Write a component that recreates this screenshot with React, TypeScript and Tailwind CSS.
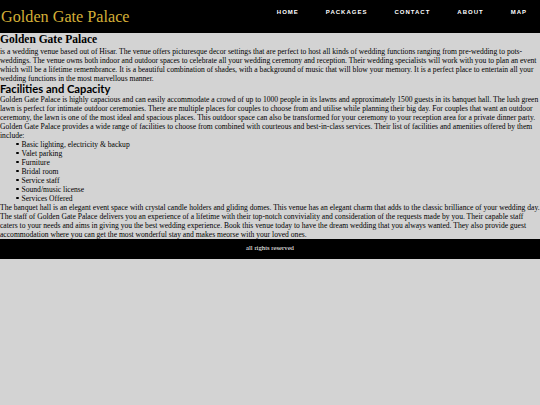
export default function App() {
  const navs = ["HOME", "PACKAGES", "CONTACT", "ABOUT", "MAP"];
  const items = [
    "Basic lighting, electricity & backup",
    "Valet parking",
    "Furniture",
    "Bridal room",
    "Service staff",
    "Sound/music license",
    "Services Offered",
  ];
  return (
    <div className="min-h-[405px] bg-[#d3d3d3] text-black font-['Liberation_Serif',serif]">
      <header className="flex h-[33px] items-start justify-between bg-black">
        <div className="pl-px pt-[8px] text-[16.2px] leading-[18px] text-[#d4af37]">Golden Gate Palace</div>
        <nav className="flex gap-[27px] pr-[13px] pt-[9px] font-['Liberation_Sans',sans-serif] text-[6px] font-bold leading-[7px] tracking-[1px] text-white">
          {navs.map((n) => (
            <span key={n}>{n}</span>
          ))}
        </nav>
      </header>
      <main className="text-[7.6px] leading-[9px]">
        <h2 className="text-[11.5px] font-bold leading-[13.5px]">Golden Gate Palace</h2>
        <p>
          is a wedding venue based out of Hisar. The venue offers picturesque decor settings that are perfect to host all kinds of wedding functions ranging from pre-wedding to pots-weddings. The venue owns both indoor and outdoor spaces to celebrate all your wedding ceremony and reception. Their wedding specialists will work with you to plan an event which will be a lifetime remembrance. It is a beautiful combination of shades, with a background of music that will blow your memory. It is a perfect place to entertain all your wedding functions in the most marvellous manner.
        </p>
        <h2 className="font-['Lato',sans-serif] text-[11.2px] font-bold leading-[12px]">Facilities and Capacity</h2>
        <p>
          Golden Gate Palace is highly capacious and can easily accommodate a crowd of up to 1000 people in its lawns and approximately 1500 guests in its banquet hall. The lush green lawn is perfect for intimate outdoor ceremonies. There are multiple places for couples to choose from and utilise while planning their big day. For couples that want an outdoor ceremony, the lawn is one of the most ideal and spacious places. This outdoor space can also be transformed for your ceremony to your reception area for a private dinner party. Golden Gate Palace provides a wide range of facilities to choose from combined with courteous and best-in-class services. Their list of facilities and amenities offered by them include:
        </p>
        <ul className="pl-[16px]">
          {items.map((i) => (
            <li key={i} className="flex items-center">
              <span className="mr-[3px] inline-block h-[2.5px] w-[2.5px] rounded-full bg-black"></span>
              <span>{i}</span>
            </li>
          ))}
        </ul>
        <p>
          The banquet hall is an elegant event space with crystal candle holders and gliding domes. This venue has an elegant charm that adds to the classic brilliance of your wedding day. The staff of Golden Gate Palace delivers you an experience of a lifetime with their top-notch conviviality and consideration of the requests made by you. Their capable staff caters to your needs and aims in giving you the best wedding experience. Book this venue today to have the dream wedding that you always wanted. They also provide guest accommodation where you can get the most wonderful stay and makes meorse with your loved ones.
        </p>
      </main>
      <footer className="flex h-[20px] items-center justify-center bg-black text-[6.7px] text-white">
        all rights reserved
      </footer>
    </div>
  );
}
